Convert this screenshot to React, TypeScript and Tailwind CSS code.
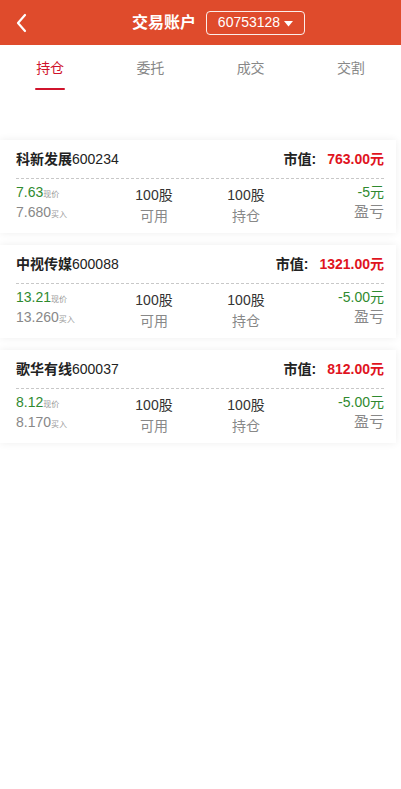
import React from 'react';

interface Position {
  name: string;
  code: string;
  value: string;
  price: string;
  cost: string;
  avail: string;
  hold: string;
  pnl: string;
}

const positions: Position[] = [
  { name: '科新发展', code: '600234', value: '763.00元', price: '7.63', cost: '7.680', avail: '100股', hold: '100股', pnl: '-5元' },
  { name: '中视传媒', code: '600088', value: '1321.00元', price: '13.21', cost: '13.260', avail: '100股', hold: '100股', pnl: '-5.00元' },
  { name: '歌华有线', code: '600037', value: '812.00元', price: '8.12', cost: '8.170', avail: '100股', hold: '100股', pnl: '-5.00元' },
];

const tabs = ['持仓', '委托', '成交', '交割'];

function PositionCard({ p }: { p: Position }) {
  return (
    <div className="mr-[5px] bg-white shadow-[0_0_8px_rgba(0,0,0,0.07)] pl-4 pr-3 pb-[11px]">
      <div className="flex items-center justify-between h-[38px] text-[14px] text-[#222]">
        <div>
          <span className="font-bold">{p.name}</span>
          <span>{p.code}</span>
        </div>
        <div className="flex items-center">
          <span className="font-bold">市值:</span>
          <span className="ml-[11px] font-bold text-[#e0141e]">{p.value}</span>
        </div>
      </div>
      <div className="border-t border-dashed border-[#c8c8c8]" />
      <div className="flex h-[43px] pt-[3px] text-[14px] leading-[20px]">
        <div className="flex-1">
          <div className="h-[20px] text-[#2f8a2f]">
            {p.price}
            <span className="text-[8px] leading-none text-[#999]">现价</span>
          </div>
          <div className="h-[20px] text-[#888]">
            {p.cost}
            <span className="text-[8px] leading-none text-[#999]">买入</span>
          </div>
        </div>
        <div className="flex-1 flex flex-col items-center pt-[3px]">
          <div className="h-[20px] text-[#333]">{p.avail}</div>
          <div className="h-[20px] text-[#888] mt-[1px]">可用</div>
        </div>
        <div className="flex-1 flex flex-col items-center pt-[3px]">
          <div className="h-[20px] text-[#333]">{p.hold}</div>
          <div className="h-[20px] text-[#888] mt-[1px]">持仓</div>
        </div>
        <div className="flex-1 flex flex-col items-end">
          <div className="h-[20px] text-[#2f8a2f]">{p.pnl}</div>
          <div className="h-[20px] text-[#888] text-[15px]">盈亏</div>
        </div>
      </div>
    </div>
  );
}

export default function App() {
  return (
    <div className="w-[401px] min-h-[789px] bg-white" style={{ fontFamily: '"Liberation Sans", "Noto Sans CJK SC", sans-serif' }}>
      {/* Header */}
      <div className="h-[45px] bg-[#df4b2c] flex items-center text-white">
        <div className="w-[44px] pl-[15px] flex items-center">
          <svg width="13" height="20" viewBox="0 0 13 20" fill="none">
            <path d="M10 2 L3 10 L10 18" stroke="white" strokeWidth="2.2" strokeLinecap="round" strokeLinejoin="round" />
          </svg>
        </div>
        <div className="ml-[88px] text-[16px] font-bold">交易账户</div>
        <button className="ml-[10px] w-[99px] h-[24px] border border-white/90 rounded-[4px] flex items-center justify-center text-[14px]">
          <span>60753128</span>
          <svg className="ml-[4px] mt-[2px]" width="9" height="6" viewBox="0 0 9 6">
            <path d="M0 0 H9 L4.5 5.5 Z" fill="white" />
          </svg>
        </button>
      </div>

      {/* Tabs */}
      <div className="flex h-[45px]">
        {tabs.map((t, i) => (
          <div key={t} className="flex-1 flex flex-col items-center">
            <div className={`mt-[13px] text-[14px] ${i === 0 ? 'text-[#d0142c]' : 'text-[#888]'}`}>{t}</div>
            {i === 0 && <div className="mt-[9px] w-[30px] h-[3px] rounded-full bg-[#d0142c]" />}
          </div>
        ))}
      </div>

      {/* Positions */}
      <div className="mt-[50px] flex flex-col gap-[12px]">
        {positions.map((p) => (
          <PositionCard key={p.code} p={p} />
        ))}
      </div>
    </div>
  );
}
